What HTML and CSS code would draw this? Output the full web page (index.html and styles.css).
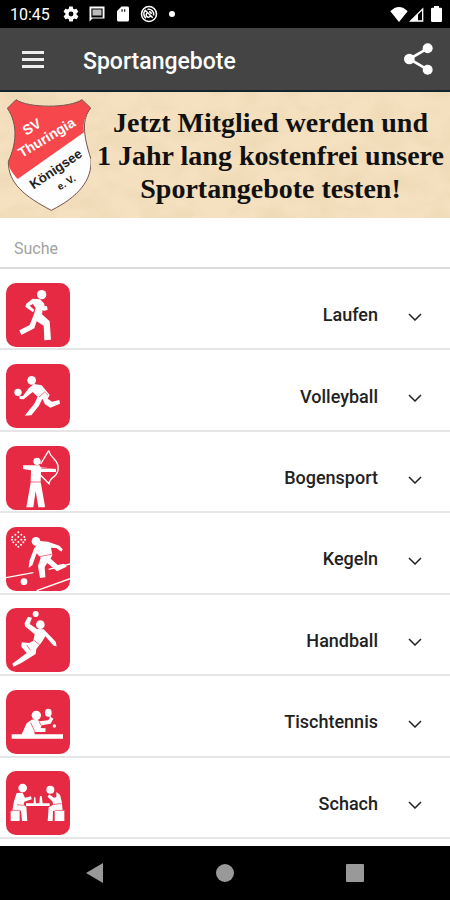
FILE: index.html
```html
<!DOCTYPE html>
<html lang="de">
<head>
<meta charset="utf-8">
<meta name="viewport" content="width=device-width, initial-scale=1">
<title>Sportangebote</title>
<link rel="stylesheet" href="styles.css">
</head>
<body>
<div class="status">
  <span class="clock">10:45</span>
  <svg width="18" height="18" viewBox="0 0 24 24" fill="#fff"><path fill-rule="evenodd" d="M19.4 13a7.500 7.500 0 0 0 0-2l2.100-1.600c.2-.2.3-.4.1-.7l-2-3.400c-.1-.2-.4-.3-.6-.2l-2.500 1a7 7 0 0 0-1.700-1l-.4-2.600c0-.3-.2-.5-.5-.5h-4c-.3 0-.5.2-.5.500L9 5.100a7 7 0 0 0-1.700 1l-2.500-1c-.2-.1-.5 0-.6.2l-2 3.400c-.1.2 0 .5.1.7L4.500 11a7.500 7.500 0 0 0 0 2l-2.100 1.600c-.2.2-.3.4-.1.700l2 3.400c.1.2.4.3.6.2l2.500-1a7 7 0 0 0 1.700 1l.4 2.600c0 .3.200.5.500.5h4c.3 0 .5-.2.500-.5l.4-2.600a7 7 0 0 0 1.700-1l2.500 1c.2.1.5 0 .6-.2l2-3.400c.1-.2.1-.5-.1-.7zM12 15.200a3.200 3.200 0 1 1 0-6.400 3.200 3.200 0 0 1 0 6.400z"/></svg>
  <svg width="18" height="18" viewBox="0 0 24 24" fill="#fff"><path fill-rule="evenodd" d="M2 2h20v16H6l-4 4zM4.500 4.500v12h15v-12z"/><path fill="#bbb" d="M6 6h12v8H6z"/></svg>
  <svg width="18" height="18" viewBox="0 0 24 24" fill="#fff"><path fill-rule="evenodd" d="M10 2h8c1.100 0 2 .9 2 2v16c0 1.100-.9 2-2 2H6c-1.100 0-2-.9-2-2V8zM10 5.500v3.500h1.500v-3.500zm3.500 0v3.500h1.500v-3.500z"/></svg>
  <svg width="18" height="18" viewBox="0 0 24 24" fill="none" stroke="#fff" stroke-width="2"><circle cx="12" cy="12" r="10"/><path d="M8 17.500a7 7 0 0 1-1-10.500L17 17M10 6a6.500 6.500 0 0 1 8 8M10 10.500a3 3 0 1 0 4 4M12 9a3 3 0 0 1 3 3"/></svg>
  <span class="dot"></span>
  <span class="signals">
    <svg width="18" height="15" viewBox="0 0 54 45" fill="#fff"><path d="M27 45 1 13C9 4 18 0 27 0s18 4 26 13z"/></svg>
    <svg width="15" height="15" viewBox="0 0 45 45" fill="none" stroke="#fff" stroke-width="4"><path d="M5 42 41 6v36z"/><path fill="#fff" stroke="none" d="M5 42 27 20v22z"/></svg>
    <svg class="battery" width="11" height="16" viewBox="0 0 33 48" fill="#fff"><path d="M9 0h15v5h5q4 0 4 4v35q0 4-4 4H4q-4 0-4-4V9q0-4 4-4h5z"/></svg>
  </span>
</div>

<header class="appbar">
  <button class="icon-btn" aria-label="Menü"><svg width="22" height="17" viewBox="0 0 22 17" fill="#eee"><path d="M0 0h22v3H0zM0 7h22v3H0zM0 14h22v3H0z"/></svg></button>
  <h1>Sportangebote</h1>
  <button class="icon-btn" aria-label="Teilen"><svg width="29" height="32" viewBox="0 0 87 96" fill="#fff"><path d="M71 16 16 48l55 32" fill="none" stroke="#fff" stroke-width="8"/><circle cx="71" cy="16" r="15"/><circle cx="16" cy="48" r="16"/><circle cx="71" cy="80" r="15"/></svg></button>
</header>

<section class="banner">
  <svg class="paper" width="100%" height="100%" aria-hidden="true">
    <filter id="grain" x="0" y="0" width="100%" height="100%">
      <feTurbulence type="fractalNoise" baseFrequency="0.035 0.05" numOctaves="3" seed="8"/>
      <feColorMatrix values="0 0 0 0 0.76  0 0 0 0 0.58  0 0 0 0 0.36  0.6 0 0 0 -0.2"/>
    </filter>
    <rect width="100%" height="100%" filter="url(#grain)"/>
  </svg>
  <svg class="crest" width="84" height="112" viewBox="21 27 252 336">
    <path fill="#fefefe" d="M48 29C85 55 208 55 246 29L272 54C246 88 248 130 273 208C276 272 235 320 154 361C75 320 24 280 25 214C48 166 56 104 22 55Z"/>
    <path fill="#f6484c" d="M48 29C85 55 208 55 246 29L272 54C253 80 249 100 252 127L53 267C34 246 25 232 25 214C48 166 56 104 22 55Z"/>
    <path fill="none" stroke="#77524a" stroke-width="3" d="M48 29C85 55 208 55 246 29L272 54C246 88 248 130 273 208C276 272 235 320 154 361C75 320 24 280 25 214C48 166 56 104 22 55Z"/>
    <g class="crest-text" text-anchor="middle">
      <text transform="translate(103 123) rotate(-31)" fill="#fff">SV</text>
      <text transform="translate(147 155) rotate(-31)" fill="#fff">Thuringia</text>
      <text class="dark" transform="translate(175 248) rotate(-34)" fill="#222">Königsee</text>
      <text class="small" transform="translate(204 286) rotate(-32)" fill="#222">e. V.</text>
    </g>
  </svg>
  <p>Jetzt Mitglied werden und<br>1 Jahr lang kostenfrei unsere<br>Sportangebote testen!</p>
</section>

<input class="search" type="search" placeholder="Suche" aria-label="Suche">

<main>
<ul class="sports">
  <li><button class="row">
    <svg class="tile" viewBox="20 23 192 192"><circle cx="127" cy="58" r="14"/><path d="M100 70 122 72 134 84 136 92 143 93 145 103 134 107 130 103 128 117 151 138 155 193 135 195 133 151 112 138 105 159 66 179 60 165 91 149 104 116 109 99 101 86 91 91 105 103 101 111 78 94 81 85Z"/></svg>
    <span>Laufen</span><svg class="chev" viewBox="0 0 14 8"><path d="M1 1 7 7 13 1"/></svg></button></li>
  <li><button class="row">
    <svg class="tile" viewBox="20 20 192 192"><circle cx="97" cy="69" r="13"/><circle cx="56" cy="105" r="11"/><path d="M104 80 127 84 151 113 145 124 158 133 180 128 182 139 153 151 137 141 129 124 119 145 96 174 76 175 105 139 115 118 100 104 73 126 61 125 60 116 71 116 88 93Z"/><path class="cut" d="m119 119 17-15 10 10"/></svg>
    <span>Volleyball</span><svg class="chev" viewBox="0 0 14 8"><path d="M1 1 7 7 13 1"/></svg></button></li>
  <li><button class="row">
    <svg class="tile" viewBox="20 22 192 192"><circle cx="113" cy="68" r="11"/><path d="M71 80H121L124 86 170 90V100H125L124 130 137 203 136 206H117L109 157 102 206H81L94 132 95 95 71 91Z"/><path class="line" d="M148 36Q152 50 165 62C183 81 178 102 164 114Q150 124 149 135L124 110M148 36 124 76"/><path class="cut" d="M94 130h31M126 89h44"/></svg>
    <span>Bogensport</span><svg class="chev" viewBox="0 0 14 8"><path d="M1 1 7 7 13 1"/></svg></button></li>
  <li><button class="row">
    <svg class="tile" viewBox="20 22 192 192"><path class="line" d="M20 174 102 159M148 149 212 133M112 213 212 177"/><path class="pins" d="M57 38v.1M48 45v.1M66 45v.1M39 52v.1M57 52v.1M75 52v.1M38 60v.1M48 60v.1M66 60v.1M77 60v.1M42 68v.1M57 67v.1M72 68v.1M50 75v.1M65 75v.1M57 81v.1"/><circle cx="110" cy="65" r="13"/><circle cx="74" cy="186" r="10"/><path d="M123 64 146 66 180 78 190 89 186 96 171 85 155 84 159 106 154 117 175 136 194 132 202 141 173 155 144 130 136 142 138 173 122 175 116 139 124 115 112 101 99 137 88 144 90 125 105 85Z"/><path class="cut" d="m119 111 38-7"/></svg>
    <span>Kegeln</span><svg class="chev" viewBox="0 0 14 8"><path d="M1 1 7 7 13 1"/></svg></button></li>
  <li><button class="row">
    <svg class="tile" viewBox="20 20 192 192"><circle cx="109" cy="38" r="9"/><circle cx="123" cy="70" r="13"/><path d="M86 46 98 49 91 68 113 83 133 84 169 121 172 135 163 133 138 105 128 121 111 143 109 158 66 185 43 196 39 187 82 155 66 136 67 123 89 125 102 118 106 99 77 75 76 65Z"/><path class="cut" d="m104 117 17 14M82 131l11 16"/></svg>
    <span>Handball</span><svg class="chev" viewBox="0 0 14 8"><path d="M1 1 7 7 13 1"/></svg></button></li>
  <li><button class="row">
    <svg class="tile" viewBox="20 19 192 192"><path d="M37 152H191V165H37ZM67 152 82 119 97 108 111 107 121 113 146 110 154 100 162 105 154 120 127 125 124 133 139 134 138 145H106V152Z"/><circle cx="111" cy="95" r="14"/><ellipse cx="147" cy="87" rx="10" ry="12"/><circle cx="165" cy="127" r="5"/><path class="line" d="m150 94 5 12"/><path class="cut" d="m94 117 14 31M119 113l6 12"/></svg>
    <span>Tischtennis</span><svg class="chev" viewBox="0 0 14 8"><path d="M1 1 7 7 13 1"/></svg></button></li>
  <li><button class="row">
    <svg class="tile" viewBox="20 21 192 192"><circle cx="70" cy="72" r="13"/><circle cx="153" cy="77" r="12"/><path d="M52 87 70 86 77 101 95 97 97 106 75 113 73 123 81 128 84 171H68L65 140H61V171H34V140H39L44 112ZM171 84 182 92 187 112 190 139H195V171H166V140H161L160 171H145L148 130 162 122 159 112 145 99 149 91 164 101 171 100ZM80 118H151V126H80ZM103 119 104 100H108L110 119ZM120 118 122 96H127L130 118Z"/><path class="cut" d="M35 139h27M167 139h27M53 122l20 2M163 121l23-2"/></svg>
    <span>Schach</span><svg class="chev" viewBox="0 0 14 8"><path d="M1 1 7 7 13 1"/></svg></button></li>
</ul>
</main>

<nav class="sysnav">
  <button aria-label="Zurück"><svg width="18" height="20" viewBox="0 0 18 20"><path d="M0 10 17 0V20Z"/></svg></button>
  <button aria-label="Startseite"><svg width="18" height="18" viewBox="0 0 18 18"><circle cx="9" cy="9" r="9"/></svg></button>
  <button aria-label="Übersicht"><svg width="18" height="18" viewBox="0 0 18 18"><rect width="18" height="18" rx="1"/></svg></button>
</nav>
</body>
</html>
```
FILE: styles.css
```css
* { box-sizing: border-box; }
body {
  margin: 0;
  min-height: 100vh;
  display: flex;
  flex-direction: column;
  background: #fff;
  font-family: Roboto, "Liberation Sans", sans-serif;
}
button {
  border: 0;
  padding: 0;
  background: none;
  color: inherit;
  font: inherit;
  cursor: pointer;
}
svg { display: block; flex: none; }

.status {
  display: flex;
  align-items: center;
  gap: 8px;
  height: 28px;
  padding: 0 8px 0 10px;
  background: #000;
  color: #fff;
}
.clock { font-size: 16px; margin-right: 4px; }
.dot { width: 6px; height: 6px; margin-left: 3px; border-radius: 50%; background: #fff; }
.signals { display: flex; align-items: center; gap: 1px; margin-left: auto; }
.battery { margin-left: 6px; }

.appbar {
  display: flex;
  align-items: center;
  height: 64px;
  padding: 0 17px 0 22px;
  border-bottom: 2px solid #14242e;
  background: #444;
  color: #fff;
}
.appbar h1 {
  flex: 1;
  margin: 4px 0 0 39px;
  font-size: 23px;
  font-weight: 500;
}

.banner {
  position: relative;
  display: flex;
  align-items: center;
  height: 126px;
  padding-left: 7px;
  background: #f5e1c0;
  overflow: hidden;
}
.paper { position: absolute; inset: 0; }
.crest { position: relative; }
.crest-text { font: bold 42px "Liberation Sans", sans-serif; }
.crest-text .dark { font-size: 40px; }
.crest-text .small { font-size: 30px; }
.banner p {
  position: relative;
  flex: 1;
  margin: 0;
  color: #111;
  font: bold 28px/33px "Liberation Serif", serif;
  text-align: center;
  white-space: nowrap;
}

.search {
  width: 100%;
  height: 51px;
  padding: 12px 14px 0;
  border: 0;
  border-bottom: 2px solid #dcdcdc;
  border-radius: 0;
  appearance: none;
  background: #fff;
  font: 16px Roboto, sans-serif;
}
.search::placeholder { color: #a2a2a2; opacity: 1; }

main { flex: 1; display: flex; padding-bottom: 7px; }
.sports {
  flex: 1;
  display: flex;
  flex-direction: column;
  margin: 0;
  padding: 0;
  list-style: none;
}
.sports li { flex: 1; display: flex; border-bottom: 2px solid #e6e6e6; }
.row {
  flex: 1;
  display: flex;
  align-items: center;
  padding: 12px 28px 0 6px;
  color: #222;
  font-size: 18px;
  font-weight: 500;
}
.row span { margin-left: auto; }
.tile {
  width: 64px;
  height: 64px;
  border-radius: 10px;
  background: #e72a43;
  fill: #fff;
}
.tile .line { fill: none; stroke: #fff; stroke-width: 4; }
.tile .cut { fill: none; stroke: #e72a43; stroke-width: 2; }
.tile .pins { fill: none; stroke: #fff; stroke-width: 6; stroke-linecap: round; }
.chev {
  width: 14px;
  height: 8px;
  margin: 4px 0 0 30px;
  fill: none;
  stroke: #222;
  stroke-width: 1.5;
}

.sysnav {
  display: flex;
  justify-content: space-between;
  align-items: center;
  height: 54px;
  padding: 0 86px;
  background: #000;
  fill: #999;
}
```
